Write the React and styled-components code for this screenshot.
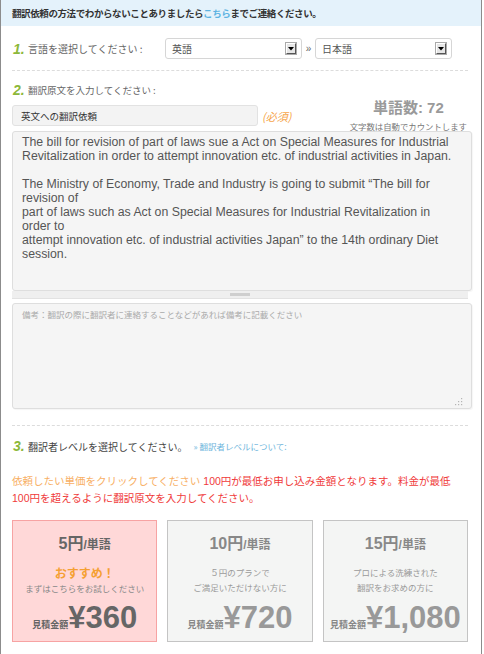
import React from 'react';
import styled, { createGlobalStyle } from 'styled-components';

const GlobalStyle = createGlobalStyle`
  html, body { margin: 0; padding: 0; background: #fff; }
  body { font-family: "Liberation Sans", "Noto Sans CJK JP", sans-serif; }
`;

const JP = `"Noto Sans CJK JP", sans-serif`;
const MIX = `"Liberation Sans", "Noto Sans CJK JP", sans-serif`;

const Page = styled.div`
  width: 482px;
  min-height: 654px;
  box-sizing: border-box;
  border-left: 1px solid #8c8c8c;
  border-right: 1px solid #8c8c8c;
  background: #fff;
`;

const Banner = styled.div`
  height: 26px;
  background: #e4f2fb;
  display: flex;
  align-items: center;
  padding-left: 11px;
  font-family: ${JP};
  font-size: 9.5px;
  font-weight: bold;
  letter-spacing: -0.4px;
  color: #333;
`;

const BannerLink = styled.a`
  color: #5cb3e2;
  text-decoration: none;
`;

const Content = styled.div`
  padding: 0 9px 0 11px;
`;

const StepRow = styled.div`
  display: flex;
  align-items: center;
  height: ${p => p.$h || 14}px;
  margin-top: ${p => p.$mt}px;
`;

const StepNum = styled.span`
  width: 15px;
  margin-left: 1px;
  font-family: "Liberation Sans", sans-serif;
  font-style: italic;
  font-weight: bold;
  font-size: 14px;
  color: #8cb83a;
`;

const StepLabel = styled.span`
  font-family: ${JP};
  font-size: ${p => p.$fs || 10}px;
  color: ${p => p.$color || '#666'};
  width: ${p => (p.$w ? `${p.$w}px` : 'auto')};
  white-space: nowrap;
`;

const SelectBox = styled.div`
  width: 137px;
  height: 21px;
  box-sizing: border-box;
  border: 1px solid #d6d6d6;
  border-radius: 3px;
  background: #fff;
  display: flex;
  align-items: center;
  justify-content: space-between;
  padding: 0 5px 0 6px;
  font-family: ${JP};
  font-size: 10px;
  color: #555;
`;

const ArrowBox = styled.span`
  width: 10px;
  height: 11px;
  box-sizing: border-box;
  background: #e6e6e6;
  border-top: 1px solid #fff;
  border-left: 1px solid #fff;
  border-right: 1px solid #555;
  border-bottom: 1px solid #555;
  box-shadow: 0 0 0 1px #aaa;
  display: flex;
  align-items: center;
  justify-content: center;
`;

const Raquo = styled.span`
  width: 13px;
  text-align: center;
  font-size: 10px;
  color: #666;
`;

const Divider = styled.div`
  width: 456px;
  margin-top: ${p => p.$mt}px;
  border-top: 1px dashed #dcdcdc;
`;

const InputRow = styled.div`
  display: flex;
  align-items: center;
  height: 21px;
  margin-top: 8px;
`;

const TextInput = styled.input`
  width: 246px;
  height: 21px;
  box-sizing: border-box;
  border: 1px solid #e2e2e2;
  border-radius: 3px;
  background: #f3f3f3;
  padding: 0 8px;
  font-family: ${JP};
  font-size: 9.5px;
  color: #333;
  outline: none;
`;

const Required = styled.span`
  margin-left: 4px;
  font-family: ${JP};
  font-style: italic;
  font-size: 11px;
  color: #f6a54a;
`;

const WordCount = styled.div`
  margin: -6px 5px -6px auto;
  display: flex;
  flex-direction: column;
  align-items: center;
`;

const WordCountBig = styled.div`
  font-family: ${MIX};
  font-weight: bold;
  font-size: 15px;
  line-height: 18px;
  color: #9a9a9a;
`;

const WordCountSmall = styled.div`
  margin-top: 3px;
  font-family: ${JP};
  font-size: 8.4px;
  line-height: 12px;
  color: #777;
  white-space: nowrap;
`;

const SourceArea = styled.textarea`
  display: block;
  width: 460px;
  height: ${p => p.$h}px;
  margin-top: ${p => p.$mt}px;
  box-sizing: border-box;
  border: 1px solid #dedede;
  border-radius: 3px;
  background: #f5f5f5;
  box-shadow: 1px 1px 1px rgba(0, 0, 0, 0.04);
  padding: 3px 8px 3px 9px;
  font-family: "Liberation Sans", sans-serif;
  font-size: 12.3px;
  line-height: 14px;
  color: #555;
  resize: none;
  overflow: hidden;
  white-space: pre;
  outline: none;
  &::placeholder {
    font-family: ${JP};
    font-size: 8.5px;
    color: #aaa;
  }
`;

const GripBar = styled.div`
  width: 456px;
  height: 8px;
  box-sizing: border-box;
  background: #efefef;
  border-bottom: 1px solid #e2e2e2;
  display: flex;
  align-items: center;
  justify-content: center;
`;

const GripMark = styled.span`
  width: 20px;
  height: 3px;
  background: #cfcfcf;
`;

const NoteWrap = styled.div`
  position: relative;
  width: 460px;
`;

const ResizeDots = styled.svg`
  position: absolute;
  right: 9px;
  bottom: 3px;
`;

const LevelLink = styled.a`
  margin-left: 6px;
  font-family: ${JP};
  font-size: 8.5px;
  color: #6fb6dc;
  text-decoration: none;
  white-space: nowrap;
`;

const Notice = styled.p`
  margin: 20px 0 0;
  font-family: ${MIX};
  font-size: 10.5px;
  line-height: 17px;
  color: #f03a3a;
  white-space: nowrap;
`;

const NoticeHint = styled.span`
  color: #f8b066;
`;

const CardGrid = styled.div`
  display: grid;
  grid-template-columns: repeat(3, 1fr);
  gap: 10px;
  width: 456px;
  margin-top: 13px;
`;

const Card = styled.div`
  height: 122px;
  box-sizing: border-box;
  display: flex;
  flex-direction: column;
  align-items: center;
  background: ${p => (p.$active ? '#ffd8d8' : '#f4f5f4')};
  border: 1px solid ${p => (p.$active ? '#f7a3a3' : '#c4c4c4')};
  cursor: pointer;
`;

const CardTitle = styled.div`
  margin-top: 13px;
  line-height: 20px;
  font-family: ${MIX};
  font-weight: bold;
  color: ${p => (p.$active ? '#666' : '#888')};
`;

const TitleMain = styled.span`
  font-size: 16px;
`;

const TitleUnit = styled.span`
  font-size: 12px;
`;

const CardDesc = styled.div`
  margin-top: 10px;
  display: flex;
  flex-direction: column;
  align-items: center;
  font-family: ${JP};
  font-size: 8.5px;
  line-height: 15px;
  color: ${p => (p.$active ? '#888' : '#9a9a9a')};
  white-space: nowrap;
`;

const Recommend = styled.div`
  font-size: 12px;
  font-weight: bold;
  line-height: 16px;
  color: #f5a033;
`;

const Amount = styled.div`
  margin-top: auto;
  margin-bottom: 8px;
  display: flex;
  align-items: baseline;
  white-space: nowrap;
  color: ${p => (p.$active ? '#666' : '#999')};
`;

const AmountLabel = styled.span`
  font-family: ${JP};
  font-size: 9px;
  font-weight: bold;
  color: ${p => (p.$active ? '#666' : '#888')};
`;

const AmountValue = styled.span`
  font-family: "Liberation Sans", sans-serif;
  font-size: 31px;
  line-height: 30px;
  font-weight: bold;
`;

const SOURCE_TEXT = [
  'The bill for revision of part of laws sue a Act on Special Measures for Industrial',
  'Revitalization in order to attempt innovation etc. of industrial activities in Japan.',
  '',
  'The Ministry of Economy, Trade and Industry is going to submit “The bill for',
  'revision of',
  'part of laws such as Act on Special Measures for Industrial Revitalization in',
  'order to',
  'attempt innovation etc. of industrial activities Japan” to the 14th ordinary Diet',
  'session.',
].join('\n');

const plans = [
  { price: '5円', amount: '¥360', active: true, recommend: 'おすすめ！', lines: ['まずはこちらをお試しください'] },
  { price: '10円', amount: '¥720', lines: ['５円のプランで', 'ご満足いただけない方に'] },
  { price: '15円', amount: '¥1,080', lines: ['プロによる洗練された', '翻訳をお求めの方に'] },
];

function Arrow() {
  return (
    <ArrowBox>
      <svg width="6" height="4" viewBox="0 0 6 4">
        <path d="M0 0 L6 0 L3 3.5 Z" fill="#000" />
      </svg>
    </ArrowBox>
  );
}

export default function App() {
  return (
    <>
      <GlobalStyle />
      <Page>
        <Banner>
          翻訳依頼の方法でわからないことありましたら<BannerLink href="#">こちら</BannerLink>までご連絡ください。
        </Banner>
        <Content>
          <StepRow $mt={12} $h={21}>
            <StepNum>1.</StepNum>
            <StepLabel $w={137}>言語を選択してください :</StepLabel>
            <SelectBox>
              <span>英語</span>
              <Arrow />
            </SelectBox>
            <Raquo>»</Raquo>
            <SelectBox>
              <span>日本語</span>
              <Arrow />
            </SelectBox>
          </StepRow>

          <Divider $mt={11} />

          <StepRow $mt={12}>
            <StepNum>2.</StepNum>
            <StepLabel $fs={9.5}>翻訳原文を入力してください :</StepLabel>
          </StepRow>

          <InputRow>
            <TextInput defaultValue="英文への翻訳依頼" />
            <Required>(必須)</Required>
            <WordCount>
              <WordCountBig>単語数: 72</WordCountBig>
              <WordCountSmall>文字数は自動でカウントします</WordCountSmall>
            </WordCount>
          </InputRow>

          <SourceArea $mt={5} $h={160} wrap="off" defaultValue={SOURCE_TEXT} />
          <GripBar>
            <GripMark />
          </GripBar>

          <NoteWrap>
            <SourceArea
              $mt={4}
              $h={106}
              placeholder="備考：翻訳の際に翻訳者に連絡することなどがあれば備考に記載ください"
            />
            <ResizeDots width="9" height="9" viewBox="0 0 9 9">
              <g fill="#b5b5b5">
                <rect x="7" y="1" width="1.2" height="1.2" />
                <rect x="4" y="4" width="1.2" height="1.2" />
                <rect x="7" y="4" width="1.2" height="1.2" />
                <rect x="1" y="7" width="1.2" height="1.2" />
                <rect x="4" y="7" width="1.2" height="1.2" />
                <rect x="7" y="7" width="1.2" height="1.2" />
              </g>
            </ResizeDots>
          </NoteWrap>

          <Divider $mt={16} />

          <StepRow $mt={13}>
            <StepNum>3.</StepNum>
            <StepLabel $color="#444">翻訳者レベルを選択してください。</StepLabel>
            <LevelLink href="#">» 翻訳者レベルについて:</LevelLink>
          </StepRow>

          <Notice>
            <NoticeHint>依頼したい単価をクリックしてください </NoticeHint>
            100円が最低お申し込み金額となります。料金が最低
            <br />
            100円を超えるように翻訳原文を入力してください。
          </Notice>

          <CardGrid>
            {plans.map(p => (
              <Card key={p.price} $active={p.active}>
                <CardTitle $active={p.active}>
                  <TitleMain>{p.price}</TitleMain>
                  <TitleUnit>/単語</TitleUnit>
                </CardTitle>
                <CardDesc $active={p.active}>
                  {p.recommend && <Recommend>{p.recommend}</Recommend>}
                  {p.lines.map(l => (
                    <span key={l}>{l}</span>
                  ))}
                </CardDesc>
                <Amount $active={p.active}>
                  <AmountLabel $active={p.active}>見積金額</AmountLabel>
                  <AmountValue>{p.amount}</AmountValue>
                </Amount>
              </Card>
            ))}
          </CardGrid>
        </Content>
      </Page>
    </>
  );
}
